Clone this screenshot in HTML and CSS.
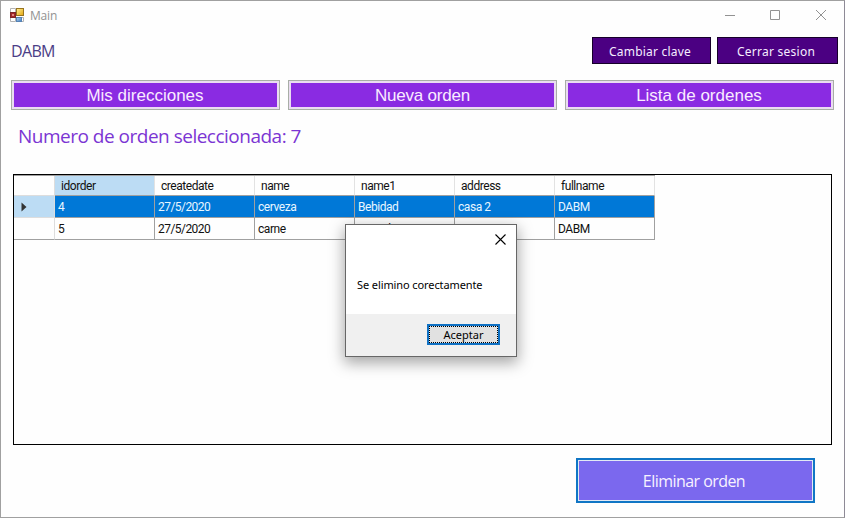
FILE: index.html
```html
<!DOCTYPE html>
<html lang="es">
<head>
<meta charset="utf-8">
<title>Main</title>
<link rel="stylesheet" href="styles.css">
</head>
<body>
<main class="window">
  <header class="titlebar">
    <svg class="app-icon" width="14" height="14" viewBox="0 0 14 14">
      <defs>
        <linearGradient id="gold" x2="1" y2="1"><stop stop-color="#fff09a"/><stop offset="1" stop-color="#e3a50c"/></linearGradient>
        <linearGradient id="blue" x2="1" y2="1"><stop stop-color="#b9d8f5"/><stop offset="1" stop-color="#3d78bd"/></linearGradient>
      </defs>
      <path d="M.5 .5h5v4h-5zM.5 9.500h5v4h-5zM11.500 9.500h2v4h-2z" fill="#fff" stroke="#b3b3b3"/>
      <rect x="6.500" y=".5" width="7" height="7" fill="url(#gold)" stroke="#98741f"/>
      <rect x=".5" y="4.500" width="5" height="5" fill="#a3262a" stroke="#7b2627"/>
      <path d="M2 6h2v2H2z" fill="#dc8580"/>
      <rect x="6.500" y="9.500" width="5" height="4" fill="url(#blue)" stroke="#5582b4"/>
    </svg>
    <span class="title">Main</span>
    <svg class="controls" width="102" height="12" viewBox="0 0 102 12">
      <path d="M0 6.500h10M45.500 1.500h9v9h-9zM91 1l10 10M101 1L91 11" fill="none" stroke="#929292"/>
    </svg>
  </header>
  <div class="account">
    <span class="user">DABM</span>
    <button class="account-btn change">Cambiar clave</button>
    <button class="account-btn logout">Cerrar sesion</button>
  </div>
  <nav class="nav">
    <button>Mis direcciones</button>
    <button class="new-order">Nueva orden</button>
    <button>Lista de ordenes</button>
  </nav>
  <h1 class="selection">Numero de orden seleccionada: 7</h1>
  <section class="grid-panel">
    <table class="grid">
      <thead>
        <tr><th></th><th class="current">idorder</th><th>createdate</th><th>name</th><th>name1</th><th>address</th><th>fullname</th></tr>
      </thead>
      <tbody>
        <tr class="selected"><th><svg class="marker" width="6" height="10" viewBox="0 0 6 10"><path d="M.5 .5v9L5.500 5z" fill="#333"/></svg></th><td>4</td><td class="date">27/5/2020</td><td>cerveza</td><td>Bebidad</td><td>casa 2</td><td>DABM</td></tr>
        <tr><th></th><td>5</td><td class="date">27/5/2020</td><td>carne</td><td>Comida</td><td>casa 2</td><td>DABM</td></tr>
      </tbody>
    </table>
  </section>
  <footer class="actions"><button class="delete">Eliminar orden</button></footer>
  <div class="dialog" role="dialog">
    <svg class="close" width="11" height="11" viewBox="0 0 11 11"><path d="M.5 .5l10 10M10.500 .5l-10 10" stroke="#000" stroke-width="1.100"/></svg>
    <p class="message">Se elimino corectamente</p>
    <div class="dialog-footer"><button class="accept"><span>Aceptar</span></button></div>
  </div>
</main>
</body>
</html>
```
FILE: styles.css
```css
* { box-sizing: border-box; }
body { margin: 0; background: #fff; font-family: "Open Sans", sans-serif; }
button { margin: 0; padding: 0; border-radius: 0; font-family: inherit; white-space: nowrap; }

.window {
  position: relative;
  width: 845px;
  height: 518px;
  border: 1px solid #a0a0a0;
  border-right-color: #8e8a96;
  background: #fefefe;
  overflow: hidden;
}

.titlebar { display: flex; align-items: center; height: 28px; padding: 0 17px 0 9px; }
.title { margin: 1px 0 0 6px; font-size: 12px; line-height: 16px; letter-spacing: -0.200px; color: #929292; }
.controls { margin-left: auto; }

.account { display: flex; height: 43px; padding: 8px 6px 0 10px; }
.user { margin-top: 3px; margin-right: auto; font-size: 16px; line-height: 22px; letter-spacing: -0.650px; color: #4b3d86; }
.account-btn {
  height: 27px;
  border: 1px solid #160029;
  background: #4b0082;
  color: #f5edff;
  font-family: "Noto Sans", sans-serif;
  font-size: 12px;
  padding-top: 2px;
}
.change { width: 119px; margin-right: 6px; padding-right: 3px; letter-spacing: 0.200px; }
.logout { width: 121px; padding-right: 3px; letter-spacing: 0.250px; }

.nav { display: flex; gap: 8px; margin-top: 8px; padding-left: 10px; }
.nav button {
  width: 269px;
  height: 30px;
  border: 1px solid #a8aea6;
  background: #8a2be2;
  box-shadow: inset 0 0 0 2px #eadcf1;
  color: #faecff;
  font-family: "Liberation Sans", sans-serif;
  font-size: 17px;
  padding: 2px 1px 0 0;
}
.nav .new-order { letter-spacing: -0.200px; padding-right: 0; }

.selection { margin: 13px 0 0 17px; height: 26px; font-size: 19px; font-weight: 400; line-height: 26px; letter-spacing: -0.500px; color: #7b35d3; white-space: nowrap; }

.grid-panel { width: 819px; height: 271px; margin: 25px 0 0 12px; border: 1px solid #000; }
.grid {
  width: 641px;
  table-layout: fixed;
  border-collapse: separate;
  border-spacing: 0;
  border-top: 1px solid #a0a0a0;
  font-family: Roboto, sans-serif;
  font-size: 12px;
  letter-spacing: -0.450px;
  color: #111;
}
.grid th, .grid td { padding: 1px 0 0 3px; border-right: 1px solid #a0a0a0; border-bottom: 1px solid #a0a0a0; font-weight: 400; text-align: left; line-height: 20px; white-space: nowrap; }
.grid th:first-child { width: 41px; border-color: #ddd; padding-left: 7px; }
.grid thead th { height: 20px; padding-left: 6px; border-right-color: #e2e2e2; border-bottom-color: #a0a0a0; line-height: 18px; }
.grid tbody tr { height: 22px; }
.grid tbody tr:last-child th { border-bottom-color: #a0a0a0; }
.grid .current, .grid .selected th { background: #bcdcf4; }
.grid .selected td { background: #0078d7; color: #e8f6ff; }
.grid .date { letter-spacing: -0.550px; }
.marker { display: block; }

.actions { display: flex; justify-content: flex-end; margin-top: 13px; padding-right: 29px; }
.delete {
  width: 239px;
  height: 45px;
  border: 2px solid #1076c5;
  background: #7b68ee;
  box-shadow: inset 0 0 0 1px #e2e9f5;
  color: #f7f2ff;
  font-size: 16px;
  letter-spacing: -0.550px;
  padding: 1px 3px 0 0;
}

.dialog {
  position: absolute;
  left: 344px;
  top: 223px;
  display: flex;
  flex-direction: column;
  width: 172px;
  height: 133px;
  border: 1px solid #676767;
  background: #fff;
  box-shadow: 0 5px 14px 1px rgba(0, 0, 0, 0.350);
}
.close { align-self: flex-end; margin: 9px 10px 0 0; }
.message { margin: 32px 0 0 11px; font-family: "Noto Sans", sans-serif; font-size: 11px; line-height: 16px; letter-spacing: -0.100px; color: #000; white-space: nowrap; }
.dialog-footer { display: flex; justify-content: flex-end; height: 42px; margin-top: auto; padding: 10px 16px 0 0; background: #f0f0f0; }
.accept { width: 73px; height: 21px; border: 2px solid #0f71c4; background: #e1e1e1; font-family: "Noto Sans", sans-serif; font-size: 11px; color: #000; }
.accept span { display: block; height: 17px; border: 1px dotted #000; line-height: 16px; }
```
